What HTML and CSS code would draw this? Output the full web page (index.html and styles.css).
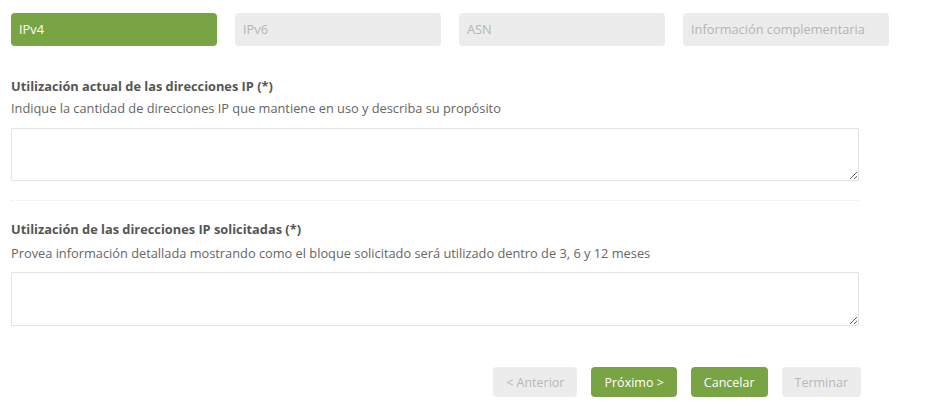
FILE: index.html
```html
<!DOCTYPE html>
<html lang="es">
<head>
<meta charset="utf-8">
<link rel="stylesheet" href="styles.css">
</head>
<body>
<div class="page">
  <div class="tabs">
    <div class="tab active">IPv4</div>
    <div class="tab">IPv6</div>
    <div class="tab">ASN</div>
    <div class="tab">Información complementaria</div>
  </div>
  <div class="section first">
    <div class="label">Utilización actual de las direcciones IP (*)</div>
    <div class="help">Indique la cantidad de direcciones IP que mantiene en uso y describa su propósito</div>
    <textarea class="field"></textarea>
  </div>
  <div class="sep"></div>
  <div class="section second">
    <div class="label">Utilización de las direcciones IP solicitadas (*)</div>
    <div class="help">Provea información detallada mostrando como el bloque solicitado será utilizado dentro de 3, 6 y 12 meses</div>
    <textarea class="field"></textarea>
  </div>
  <div class="actions">
    <button class="btn disabled">&lt; Anterior</button>
    <button class="btn primary">Próximo &gt;</button>
    <button class="btn primary">Cancelar</button>
    <button class="btn disabled">Terminar</button>
  </div>
</div>
</body>
</html>
```
FILE: styles.css
```css
html, body {
  margin: 0;
  padding: 0;
  background: #fff;
}
body {
  font-family: "Open Sans", "Noto Sans", sans-serif;
  font-size: 12.8px;
  color: #555;
}
.page {
  width: 878px;
  padding: 13px 0 0 11px;
}
.tabs {
  display: flex;
  gap: 18px;
}
.tab {
  width: 206px;
  height: 33px;
  box-sizing: border-box;
  border-radius: 4px;
  background: #ececec;
  color: #b5b5b5;
  padding: 0 8px;
  line-height: 33px;
  font-size: 12.8px;
  white-space: nowrap;
}
.tab.active {
  background: #79a443;
  color: #fff;
}
.section {
  width: 848px;
}
.first {
  margin-top: 31px;
}
.label {
  font-weight: bold;
  color: #555;
  line-height: 18px;
}
.help {
  margin-top: 4px;
  color: #666;
  line-height: 18px;
}
.field {
  display: block;
  width: 848px;
  height: 53px;
  box-sizing: border-box;
  margin-top: 11px;
  border: 1px solid #e3e3e3;
  border-radius: 1px;
  font: inherit;
  padding: 6px;
}
.second .help {
  margin-top: 6px;
}
.second .field {
  height: 54px;
  margin-top: 10px;
}
.sep {
  width: 848px;
  margin-top: 19px;
  border-top: 1px dotted #eaeaea;
  height: 0;
}
.second {
  margin-top: 19px;
}
.actions {
  width: 850px;
  display: flex;
  justify-content: flex-end;
  gap: 14px;
  margin-top: 41px;
}
.btn {
  height: 30px;
  border: none;
  border-radius: 4px;
  font-family: inherit;
  font-size: 12.5px;
  padding: 0 13px;
}
.btn.disabled {
  background: #ececec;
  color: #b8b8b8;
}
.btn.primary {
  background: #79a443;
  color: #fff;
}
```
